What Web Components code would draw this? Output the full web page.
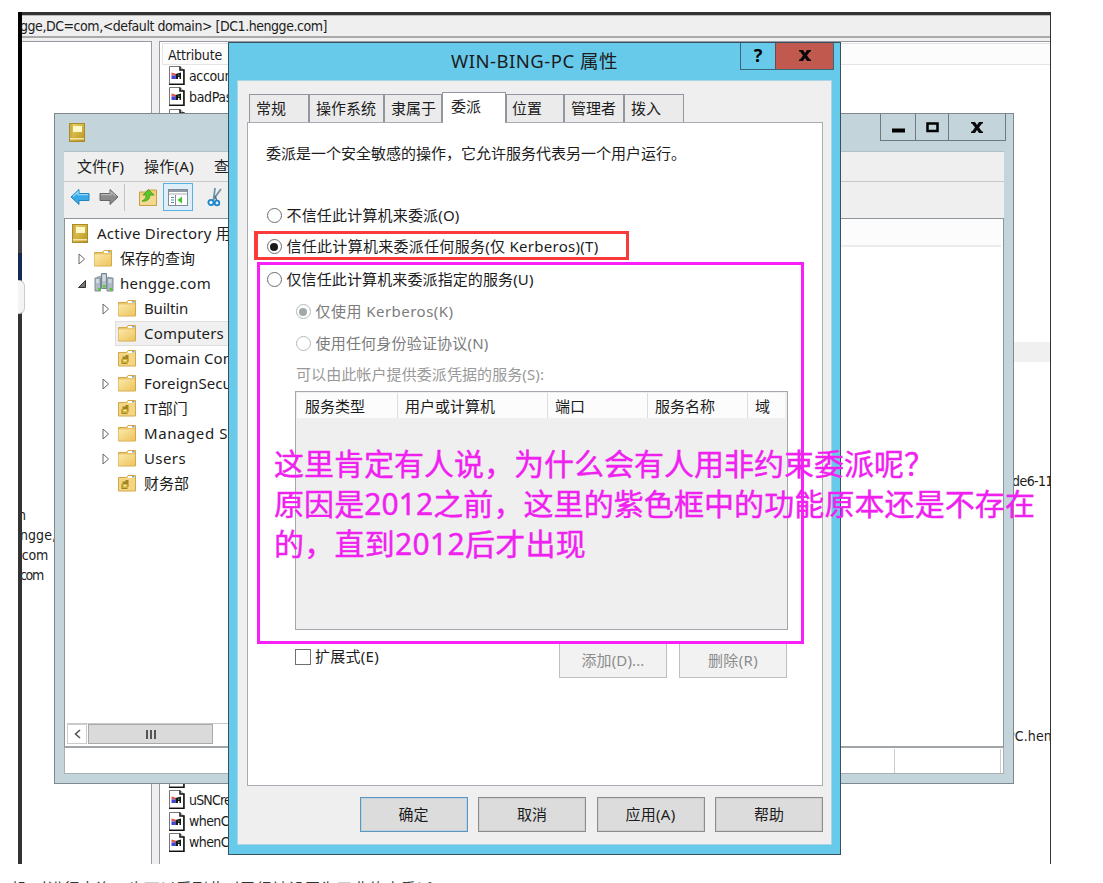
<!DOCTYPE html>
<html lang="zh-CN">
<head>
<meta charset="utf-8">
<title>WIN-BING-PC 属性</title>
<style>
    body {
        margin: 0;
        width: 1103px;
        height: 883px;
        overflow: hidden;
        position: relative;
        background: #fff;
        color: #1c1c1c;
        font: 15px/20px "Noto Sans", "Noto Sans CJK SC", sans-serif;
    }
    desktop-shot { position: absolute; left: 18px; top: 12px; }
    .caption { position: absolute; left: 11px; top: 879px; font-size: 16px; color: #333; }
</style>
</head>
<body>
<desktop-shot></desktop-shot>
<ui-text class="caption" w="422">机,对进行查询，也可以看到此时已经被设置为了非约束委派</ui-text>

<script>
const TAHOMA = '"DejaVu Sans Condensed", "DejaVu Sans", "Noto Sans CJK SC", sans-serif';

const ICONS = {
    book: `<svg width="16" height="19" viewBox="0 0 16 19"><defs><linearGradient id="g" x2="1" y2="1"><stop stop-color="#f0d86a"/><stop offset="1" stop-color="#b8921c"/></linearGradient></defs><rect x=".5" y=".5" width="15" height="18" fill="url(#g)" stroke="#a98a2c"/><rect x="1" y="1" width="2.5" height="14" fill="#cfae45"/><rect x="4" y="3" width="9" height="6" fill="#fff8c9"/><rect x="1" y="15" width="14" height="1.5" fill="#f3e6a8"/></svg>`,
    folder: `<svg width="18" height="18" viewBox="0 0 18 18"><defs><linearGradient id="g" x2="1" y2="1"><stop stop-color="#fbe9a9"/><stop offset="1" stop-color="#edc35d"/></linearGradient></defs><path d="M.5 17V3.500h8l1.500-2h7.500V17z" fill="#e9c66e" stroke="#d4a848"/><rect x="10" y="2" width="6" height="2" fill="#fff"/><rect x="14" y="2" width="2" height="1.500" fill="#64a8dc"/><path d="M.5 5.500H17v11H.5z" fill="url(#g)"/></svg>`,
    unit: `<svg width="18" height="18" viewBox="0 0 18 18"><path d="M.5 17V3.500h8l1.500-2h7.500V17z" fill="#f4d582" stroke="#d4a848"/><rect x="10" y="2" width="6" height="2" fill="#fff"/><rect x="14" y="2" width="2" height="1.500" fill="#64a8dc"/><path d="M4.500 7.500h3V6h3v7h-1v2h-6v-5h1z" fill="#9f8425"/><path d="M4.500 10h5v4h-5z" fill="#d3b23f"/><path d="M5.500 11h3v1.200h-3z" fill="#fff2a2"/></svg>`,
    domain: `<svg width="20" height="20" viewBox="0 0 20 20"><path d="M3 4l4-1v9H3zM14 4l4 1v9h-4z" fill="#c5ced4" stroke="#8896a2" stroke-width=".7"/><path d="M7.500.5h5v15h-5z" fill="#b5c1ca" stroke="#728392"/><path d="M1 5h5.500v13H1zM13 5h6v13h-6z" fill="#aebac4" stroke="#7c8b98"/><path d="M2 7h3M2 9h3M14.500 7h3M14.500 9h3M8.500 3h3M8.500 5h3M8.500 7h3" stroke="#eef5f8"/><path d="M4 15h2.500v2.500H4zM9 12h2.500v2.500H9zM15.500 15H18v2.500h-2.500z" fill="#55cc2c"/></svg>`,
    back: `<svg width="20" height="18" viewBox="0 0 20 18"><path d="M1 9l8-7.500V5.500h10v7H9v4z" fill="#36a9e6" stroke="#2285bd"/><path d="M3 8.500L8 4v2.700h10" fill="none" stroke="#8fd6f7" stroke-width="1.300"/></svg>`,
    forward: `<svg width="20" height="18" viewBox="0 0 20 18"><path d="M19 9l-8-7.500V5.500H1v7h10v4z" fill="#8b8b8b" stroke="#666"/><path d="M2 6.700h10V4l4.500 4" fill="none" stroke="#b9b9b9" stroke-width="1.200"/></svg>`,
    up: `<svg width="18" height="18" viewBox="0 0 18 18"><path d="M.5 17.500V4h6l2-2h9v15.500z" fill="#efcf79" stroke="#c9a047"/><path d="M1 8h16v9H1z" fill="#f3d98d"/><path d="M3 13c4-2 4-4 4-6H4l5.500-5.500L15 7h-4c0 4-3 7-8 6z" fill="#5cc52c" stroke="#3c951b" stroke-width=".7"/></svg>`,
    pane: `<svg width="20" height="17" viewBox="0 0 20 17"><rect x=".5" y=".5" width="19" height="16" fill="#fff" stroke="#858b93"/><path d="M1 1h18v2H1z" fill="#929aa5"/><path d="M1 5h18" stroke="#a8aeb5"/><path d="M7.500 6v10" stroke="#858b93"/><path d="M3 8.500h3M3 11h3M3 13.500h3" stroke="#5a86b3"/><path d="M14 7.500v7L9.500 11z" fill="#3fc72b"/></svg>`,
    cut: `<svg width="16" height="20" viewBox="0 0 16 20"><path d="M8 1L6.500 13M14 2L6 13" stroke="#7390a5" stroke-width="1.800"/><path d="M8 9l2 5" stroke="#4b708e" stroke-width="1.500"/><circle cx="4" cy="15.500" r="2.600" fill="none" stroke="#1b87cb" stroke-width="1.800"/><circle cx="10" cy="16" r="2.300" fill="none" stroke="#1b87cb" stroke-width="1.800"/></svg>`,
    attr: `<svg width="16" height="19" viewBox="0 0 16 19"><path d="M.5.500H11L14.500 4v14H.5z" fill="#fff" stroke="#777"/><path d="M11 .5V4h4v14.500H0" fill="none" stroke="#111" stroke-width="1.500"/><path d="M2.500 6.500l4 1v2h-4z" fill="#ed5454"/><path d="M2.500 9.500h4v3.500h-4z" fill="#3f43ea"/><path d="M6.500 8l5.500-1.500V13h-1.500v-2H9v2H6.500z" fill="#171717"/><path d="M9 8.500h1.500V10H9z" fill="#2f8a45"/></svg>`,
    closed: `<svg width="8" height="12" viewBox="0 0 8 12"><path d="M1 1l5.500 5L1 11z" fill="#fff" stroke="#666"/></svg>`,
    open: `<svg width="8" height="8" viewBox="0 0 8 8"><path d="M7.500.5v7h-7z" fill="#777" stroke="#333"/></svg>`,
    close: `<svg width="12" height="11" viewBox="0 0 12 11"><path d="M0 0h4l2 3 2-3h4v1.500h-1L8 5.500l3 4h1V11H8L6 8l-2 3H0V9.500h1l3-4-3-4H0z" fill="#0a0a0a"/></svg>`,
    min: `<svg width="13" height="11" viewBox="0 0 13 11"><path d="M0 6.500h13v4H0z" fill="#000"/></svg>`,
    max: `<svg width="13" height="11" viewBox="0 0 13 11"><path d="M1.500 1.500h10v7.500h-10z" fill="none" stroke="#000" stroke-width="2.500"/></svg>`
};

class UiIcon extends HTMLElement {
    connectedCallback() {
        this.attachShadow({ mode: 'open' });
        this.shadowRoot.innerHTML = `
            <style>:host { display: block; flex: none; } svg { display: block; }</style>
            ${ICONS[this.getAttribute('name')]}`;
    }
}

// Single line of text, tracked so that it fills the width in "w"
class UiText extends HTMLElement {
    connectedCallback() {
        this.attachShadow({ mode: 'open' });
        this.shadowRoot.innerHTML = `
            <style>:host { display: block; flex: none; white-space: nowrap; } span { display: inline-block; vertical-align: top; }</style>
            <span><slot></slot></span>`;
        const w = parseFloat(this.getAttribute('w'));
        if (!w) return;
        const span = this.shadowRoot.querySelector('span');
        const count = [...this.textContent].length;
        span.style.letterSpacing = ((w - span.getBoundingClientRect().width) / count) + 'px';
    }
}

class AttrRow extends HTMLElement {
    connectedCallback() {
        this.attachShadow({ mode: 'open' });
        this.shadowRoot.innerHTML = `
            <style>
                :host { display: flex; align-items: center; gap: 4px; height: 21.28px; }
            </style>
            <ui-icon name="attr"></ui-icon><slot></slot>`;
    }
}

class AdsiWindow extends HTMLElement {
    connectedCallback() {
        this.attachShadow({ mode: 'open' });
        this.shadowRoot.innerHTML = `
            <style>
                :host {
                    display: flex;
                    flex-direction: column;
                    height: 100%;
                    box-sizing: border-box;
                    background: #efefef;
                    font: 14px/20px ${TAHOMA};
                }
                .title { height: 20px; border-bottom: 2px solid #a9a9a9; border-top: 1px solid #bbb; overflow: hidden; display: flex; }
                .title ui-text { margin-left: -2px; }
                .panes { flex: 1; display: flex; padding-top: 3px; min-height: 0; }
                .left { width: 130px; background: #fff; border: solid #9999a3; border-width: 1px 1px 0 0; overflow: hidden; box-sizing: border-box; padding-top: 463px; }
                .gap { width: 7px; }
                .right { flex: 1; display: flex; flex-direction: column; background: #fff; border: solid #9999a3; border-width: 1px 0 0 1px; position: relative; overflow: hidden; }
                .head { height: 20px; margin: 1px 0 0 2px; border: 1px solid #e4e4e4; border-right: 0; background: #fcfcfc; padding-left: 5px; line-height: 22px; }
                .rows { flex: 1; min-height: 0; display: flex; flex-direction: column; justify-content: space-between; padding: 0 0 11px 9px; }
                .hot { position: absolute; left: 850px; right: 0; top: 300px; height: 20px; background: #f0f0f0; }
                .tail { position: absolute; }
            </style>
            <div class="title"><ui-text w="307">gge,DC=com,&lt;default domain&gt; [DC1.hengge.com]</ui-text></div>
            <div class="panes">
                <div class="left">
                    <ui-text style="margin-left:-4px">n</ui-text>
                    <ui-text style="margin-left:-2px" w="36">ngge,</ui-text>
                    <ui-text style="margin-left:-4px" w="30">.com</ui-text>
                    <ui-text style="margin-left:-2px" w="23">com</ui-text>
                </div>
                <div class="gap"></div>
                <div class="right">
                    <div class="head"><ui-text w="54">Attribute</ui-text></div>
                    <div class="rows">
                        <div>
                            <attr-row><ui-text w="43">accoun</ui-text></attr-row>
                            <attr-row><ui-text w="43">badPas</ui-text></attr-row>
                            <attr-row></attr-row>
                        </div>
                        <div>
                            <attr-row></attr-row>
                            <attr-row><ui-text w="42">uSNCre</ui-text></attr-row>
                            <attr-row><ui-text w="40">whenC</ui-text></attr-row>
                            <attr-row><ui-text w="40">whenC</ui-text></attr-row>
                        </div>
                    </div>
                    <div class="hot"></div>
                    <ui-text class="tail" style="top:429px;left:852px" w="41">de6-11</ui-text>
                    <ui-text class="tail" style="top:684px;left:847px" w="45">PC.hen</ui-text>
                </div>
            </div>`;
    }
}

class TreeItem extends HTMLElement {
    connectedCallback() {
        const arrow = this.getAttribute('arrow');
        this.attachShadow({ mode: 'open' });
        this.shadowRoot.innerHTML = `
            <style>
                :host { display: flex; height: 25px; align-items: center; }
                :host([level="1"]) { padding-left: 13px; }
                :host([level="2"]) { padding-left: 37px; }
                .arrow { width: 13px; flex: none; }
                .label { display: flex; align-items: center; height: 23px; gap: 8px; padding-left: 2px; border: 1px solid transparent; flex: 1; }
                :host([level="0"]) .arrow { display: none; }
                :host([level="0"]) .label { padding-left: 6px; gap: 9px; }
                :host([selected]) .label { background: #f0f0f0; border-color: #dedede; }
                .label ui-icon { margin-bottom: 1px; }
                ::slotted(ui-text) { margin-bottom: 2px; }
            </style>
            <div class="arrow">${arrow ? `<ui-icon name="${arrow}"></ui-icon>` : ''}</div>
            <div class="label"><ui-icon name="${this.getAttribute('icon')}"></ui-icon><slot></slot></div>`;
    }
}

class ConsoleWindow extends HTMLElement {
    connectedCallback() {
        this.attachShadow({ mode: 'open' });
        this.shadowRoot.innerHTML = `
            <style>
                :host {
                    display: flex;
                    flex-direction: column;
                    box-sizing: border-box;
                    width: 960px;
                    height: 671px;
                    border: 1px solid #7e888d;
                    background: #c3d5db;
                    padding: 0 9px 9px;
                }
                .title { height: 37px; display: flex; padding: 0 0 0 5px; box-sizing: border-box; }
                .title > ui-icon { margin-top: 9px; }
                .buttons { margin-left: auto; margin-right: -2px; display: flex; height: 26px; border: 1px solid #6f7a80; border-top: 0; }
                .buttons div { display: flex; align-items: center; justify-content: center; border-left: 1px solid #6f7a80; width: 32px; }
                .buttons div:first-child { border: 0; width: 34px; }
                .buttons div:last-child { width: 56px; }
                .menu { height: 29px; border-top: 1px solid #b2c0c5; border-bottom: 1px solid #c9c9c9; background: #efefef; display: flex; align-items: center; gap: 20px; padding-left: 13px; }
                .menu ui-text { margin-bottom: 2px; }
                .tools { height: 36px; background: #efefef; display: flex; align-items: center; padding: 0 0 6px 6px; box-sizing: border-box; }
                .sep { width: 1px; height: 27px; background: #c3c3c3; margin: 0 14px 0 5px; }
                .on { width: 28px; height: 26px; border: 1px solid #58b2e0; background: #deeffa; display: flex; align-items: center; justify-content: center; margin: 0 14px 0 6px; }
                .body { flex: 1; min-height: 0; display: flex; border: 1px solid #8e949c; border-bottom: 2px solid #a0a5aa; background: #fff; }
                .left { width: 300px; display: flex; flex-direction: column; }
                .tree { padding-top: 2px; flex: 1; }
                .bar { height: 21px; display: flex; border-top: 1px solid #c9c9c9; margin: 0 0 2px 2px; box-sizing: border-box; }
                .bar .btn { width: 20px; display: flex; align-items: center; justify-content: center; border: 1px solid #ccc; box-sizing: border-box; }
                .thumb { width: 125px; margin-left: 1px; background: #dadada; border: 1px solid #a9a9a9; box-sizing: border-box; display: flex; gap: 2px; align-items: center; justify-content: center; }
                .thumb i { width: 2px; height: 9px; background: #555; }
                .right { flex: 1; }
                .head { height: 26px; background: #fcfcfc; border-bottom: 2px solid #ececec; margin-right: 2px; }
                .status { height: 26px; background: #fff; border: solid #aaafb2; border-width: 0 1px 1px; display: flex; justify-content: flex-end; padding: 1px 2px 0; box-sizing: border-box; }
                .status div { width: 105px; border: solid #ccc; border-width: 0 1px; }
            </style>
            <div class="title">
                <ui-icon name="book"></ui-icon>
                <div class="buttons"><div><ui-icon name="min"></ui-icon></div><div><ui-icon name="max"></ui-icon></div><div><ui-icon name="close"></ui-icon></div></div>
            </div>
            <div class="menu"><ui-text w="47">文件(F)</ui-text><ui-text w="50">操作(A)</ui-text><ui-text>查</ui-text></div>
            <div class="tools">
                <ui-icon name="back"></ui-icon>
                <ui-icon name="forward" style="margin-left:9px"></ui-icon>
                <div class="sep"></div>
                <ui-icon name="up"></ui-icon>
                <div class="on"><ui-icon name="pane"></ui-icon></div>
                <ui-icon name="cut"></ui-icon>
            </div>
            <div class="body">
                <div class="left">
                    <div class="tree">
                        <tree-item level="0" icon="book"><ui-text w="134">Active Directory 用</ui-text></tree-item>
                        <tree-item level="1" icon="folder" arrow="closed"><ui-text>保存的查询</ui-text></tree-item>
                        <tree-item level="1" icon="domain" arrow="open"><ui-text w="91" style="margin-left:-2px">hengge.com</ui-text></tree-item>
                        <tree-item level="2" icon="folder" arrow="closed"><ui-text w="44">Builtin</ui-text></tree-item>
                        <tree-item level="2" icon="folder" selected><ui-text w="80">Computers</ui-text></tree-item>
                        <tree-item level="2" icon="unit"><ui-text w="88">Domain Con</ui-text></tree-item>
                        <tree-item level="2" icon="folder" arrow="closed"><ui-text w="88">ForeignSecu</ui-text></tree-item>
                        <tree-item level="2" icon="unit"><ui-text w="44">IT部门</ui-text></tree-item>
                        <tree-item level="2" icon="folder" arrow="closed"><ui-text w="84">Managed S</ui-text></tree-item>
                        <tree-item level="2" icon="folder" arrow="closed"><ui-text w="42">Users</ui-text></tree-item>
                        <tree-item level="2" icon="unit"><ui-text>财务部</ui-text></tree-item>
                    </div>
                    <div class="bar">
                        <div class="btn"><svg width="7" height="10"><path d="M6 1L1.500 5 6 9" fill="none" stroke="#555" stroke-width="1.600"/></svg></div>
                        <div class="thumb"><i></i><i></i><i></i></div>
                    </div>
                </div>
                <div class="right"><div class="head"></div></div>
            </div>
            <div class="status"><div></div></div>`;
    }
}

class UiButton extends HTMLElement {
    connectedCallback() {
        this.attachShadow({ mode: 'open' });
        this.shadowRoot.innerHTML = `
            <style>
                :host {
                    display: flex;
                    align-items: center;
                    justify-content: center;
                    box-sizing: border-box;
                    width: 108px;
                    height: 35px;
                    background: #dcdcdc;
                    border: 1px solid #8c8c8c;
                    box-shadow: inset 0 0 0 1px #cfcfcf;
                }
                :host([primary]) { border-color: #5c97c2; box-shadow: inset 0 0 0 1px #c2d2dd; }
                :host([disabled]) { background: #f2f2f2; border-color: #bcc0c2; box-shadow: none; color: #8c8c8c; }
                ::slotted(ui-text) { margin-bottom: 2px; }
            </style>
            <slot></slot>`;
    }
}

class RadioRow extends HTMLElement {
    connectedCallback() {
        this.attachShadow({ mode: 'open' });
        this.shadowRoot.innerHTML = `
            <style>
                :host { display: flex; align-items: center; gap: 5px; height: 22px; margin-top: 10px; padding-left: .5px; --ring: #6c6c6c; --dot: #1a1a1a; }
                :host([disabled]) { padding-left: 29.500px; gap: 5px; color: #7c7c7c; --ring: #b6baba; --dot: #a3a8a8; }
                .ring { width: 15px; height: 15px; margin-bottom: 1px; box-sizing: border-box; border: 1.500px solid var(--ring); border-radius: 50%; display: flex; align-items: center; justify-content: center; background: #fff; }
                :host([checked]) .ring::after { content: ""; width: 8px; height: 8px; border-radius: 50%; background: var(--dot); }
                ::slotted(ui-text) { margin-bottom: 2px; }
            </style>
            <div class="ring"></div><slot></slot>`;
    }
}

class TabItem extends HTMLElement {
    connectedCallback() {
        this.attachShadow({ mode: 'open' });
        this.style.width = this.getAttribute('w') + 'px';
        this.shadowRoot.innerHTML = `
            <style>
                :host {
                    display: block;
                    box-sizing: border-box;
                    height: 28px;
                    padding: 3px 0 0 6px;
                    border: 1px solid #94959e;
                    border-bottom: 0;
                    background: #ebebeb;
                }
                :host([selected]) { height: 31px; margin-bottom: -1px; padding: 3px 0 0 8px; background: #fff; z-index: 1; }
            </style>
            <slot></slot>`;
    }
}

class PropertyDialog extends HTMLElement {
    connectedCallback() {
        this.attachShadow({ mode: 'open' });
        this.shadowRoot.innerHTML = `
            <style>
                :host {
                    display: flex;
                    flex-direction: column;
                    box-sizing: border-box;
                    width: 613px;
                    height: 813px;
                    border: 1px solid #36525e;
                    background: #67caea;
                    padding: 0 8px 9px;
                }
                .title { height: 37px; flex: none; display: flex; justify-content: flex-end; }
                .name { font-size: 18.500px; line-height: 36px; margin-right: 122px; }
                .cap { display: flex; height: 26px; border: 1px solid #39687a; border-top: 0; margin-right: -2px; font: bold 18px/25px "Noto Sans", sans-serif; color: #000; }
                .cap div { width: 34px; padding-bottom: 1px; box-sizing: border-box; display: flex; align-items: center; justify-content: center; }
                .cap .x { width: 58px; background: #c1594f; border-left: 1px solid #6a4a4a; }
                .body { flex: 1; background: #efefef; border: 1px solid #a9d5e4; box-sizing: border-box; padding: 11px 8px 12px 9px; display: flex; flex-direction: column; }
                .tabs { display: flex; align-items: flex-end; height: 30px; padding-left: 2px; }
                .panel { flex: 1; background: #fff; border: 1px solid #a9abb3; padding: 0 35px 0 18px; display: flex; flex-direction: column; }
                .intro { line-height: 60px; height: 62px; margin-bottom: 10px; }
                .hint { color: #999; margin: 9px 0 5px 30px; line-height: 20px; height: 22px; }
                .list { height: 239px; margin-left: 29px; border: 1px solid #a4a8ae; background: #efefef; box-sizing: border-box; padding: 1px; width: 493px; }
                .cols { display: flex; height: 25px; padding-right: 1px; }
                .cols ui-text { box-sizing: border-box; background: #fcfcfc; line-height: 26px; height: 25px; border-right: 1px solid #ddd; padding-left: 8px; }
                .cols ui-text + ui-text { padding-left: 7px; }
                .cols ui-text:last-child { border: 0; flex: 1; }
                .row { display: flex; margin: 13px 0 0 29px; height: 35px; }
                .check { display: flex; align-items: center; height: 28px; gap: 4px; flex: 1; }
                .check ui-text { margin-bottom: 2px; }
                .box { width: 16px; height: 16px; box-sizing: border-box; border: 1px solid #707070; }
                ui-button + ui-button { margin-left: 12px; }
                .foot { display: flex; justify-content: flex-end; margin-top: 11px; }
                .foot ui-button + ui-button { margin-left: 10.500px; }
            </style>
            <div class="title">
                <ui-text class="name" w="167">WIN-BING-PC 属性</ui-text>
                <div class="cap"><div>?</div><div class="x"><ui-icon name="close"></ui-icon></div></div>
            </div>
            <div class="body">
                <div class="tabs">
                    <tab-item w="60"><ui-text>常规</ui-text></tab-item>
                    <tab-item w="75"><ui-text>操作系统</ui-text></tab-item>
                    <tab-item w="58"><ui-text>隶属于</ui-text></tab-item>
                    <tab-item w="64" selected><ui-text>委派</ui-text></tab-item>
                    <tab-item w="58"><ui-text style="margin-left:-1px">位置</ui-text></tab-item>
                    <tab-item w="60"><ui-text>管理者</ui-text></tab-item>
                    <tab-item w="60"><ui-text>拨入</ui-text></tab-item>
                </div>
                <div class="panel">
                    <ui-text class="intro">委派是一个安全敏感的操作，它允许服务代表另一个用户运行。</ui-text>
                    <radio-row><ui-text w="173">不信任此计算机来委派(O)</ui-text></radio-row>
                    <radio-row checked style="margin-top:9px"><ui-text w="312">信任此计算机来委派任何服务(仅 Kerberos)(T)</ui-text></radio-row>
                    <radio-row style="margin-top:11px"><ui-text w="247">仅信任此计算机来委派指定的服务(U)</ui-text></radio-row>
                    <radio-row disabled checked><ui-text w="138">仅使用 Kerberos(K)</ui-text></radio-row>
                    <radio-row disabled><ui-text w="173">使用任何身份验证协议(N)</ui-text></radio-row>
                    <ui-text class="hint" w="248">可以由此帐户提供委派凭据的服务(S):</ui-text>
                    <div class="list">
                        <div class="cols">
                            <ui-text style="width:101px">服务类型</ui-text>
                            <ui-text style="width:150px">用户或计算机</ui-text>
                            <ui-text style="width:100px">端口</ui-text>
                            <ui-text style="width:100px">服务名称</ui-text>
                            <ui-text>域</ui-text>
                        </div>
                    </div>
                    <div class="row">
                        <div class="check"><div class="box"></div><ui-text w="64">扩展式(E)</ui-text></div>
                        <ui-button disabled><ui-text w="63">添加(D)...</ui-text></ui-button>
                        <ui-button disabled><ui-text w="50">删除(R)</ui-text></ui-button>
                    </div>
                </div>
                <div class="foot">
                    <ui-button primary><ui-text>确定</ui-text></ui-button>
                    <ui-button><ui-text>取消</ui-text></ui-button>
                    <ui-button><ui-text w="50">应用(A)</ui-text></ui-button>
                    <ui-button><ui-text>帮助</ui-text></ui-button>
                </div>
            </div>`;
    }
}

class DesktopShot extends HTMLElement {
    connectedCallback() {
        this.attachShadow({ mode: 'open' });
        this.shadowRoot.innerHTML = `
            <style>
                :host { display: block; box-sizing: border-box; width: 1033px; height: 852px; background: #333; padding: 3px 1px 0 4px; }
                .screen { height: 849px; overflow: hidden; }
                .edge { position: absolute; left: 0; top: 0; width: 4px; }
                .knob { position: absolute; left: 0; top: 268px; width: 7px; height: 34px; box-sizing: border-box; background: #f4f4f4; border: 1px solid #ccc; border-left: 0; border-radius: 0 6px 6px 0; }
                console-window { position: absolute; left: 36px; top: 101px; }
                property-dialog { position: absolute; left: 210px; top: 30px; }
                .mark { position: absolute; box-sizing: border-box; border: 3px solid #fb3b3b; }
                .red { left: 236px; top: 219px; width: 375px; height: 29px; border-width: 3px 3px 3px 4px; }
                .pink { left: 239px; top: 250px; width: 547px; height: 382px; border-color: #f81ff8; }
                .note { position: absolute; left: 256px; top: 432px; font-size: 30px; line-height: 40px; color: #f020f0; -webkit-text-stroke: .4px #f020f0; }
            </style>
            <div class="screen"><adsi-window></adsi-window></div>
            <div class="edge" style="height:218px;background:#000"></div>
            <div class="edge" style="top:218px;height:23px;background:#444"></div>
            <div class="edge" style="top:241px;height:27px;background:#132b4e"></div>
            <div class="knob"></div>
            <console-window></console-window>
            <property-dialog></property-dialog>
            <div class="mark red"></div>
            <div class="mark pink"></div>
            <div class="note">
                <ui-text w="660">这里肯定有人说，为什么会有人用非约束委派呢？</ui-text>
                <ui-text w="761">原因是2012之前，这里的紫色框中的功能原本还是不存在</ui-text>
                <ui-text w="312">的，直到2012后才出现</ui-text>
            </div>`;
    }
}

customElements.define('ui-icon', UiIcon);
customElements.define('ui-text', UiText);
customElements.define('attr-row', AttrRow);
customElements.define('adsi-window', AdsiWindow);
customElements.define('tree-item', TreeItem);
customElements.define('ui-button', UiButton);
customElements.define('radio-row', RadioRow);
customElements.define('tab-item', TabItem);
customElements.define('console-window', ConsoleWindow);
customElements.define('property-dialog', PropertyDialog);
customElements.define('desktop-shot', DesktopShot);
</script>
</body>
</html>
